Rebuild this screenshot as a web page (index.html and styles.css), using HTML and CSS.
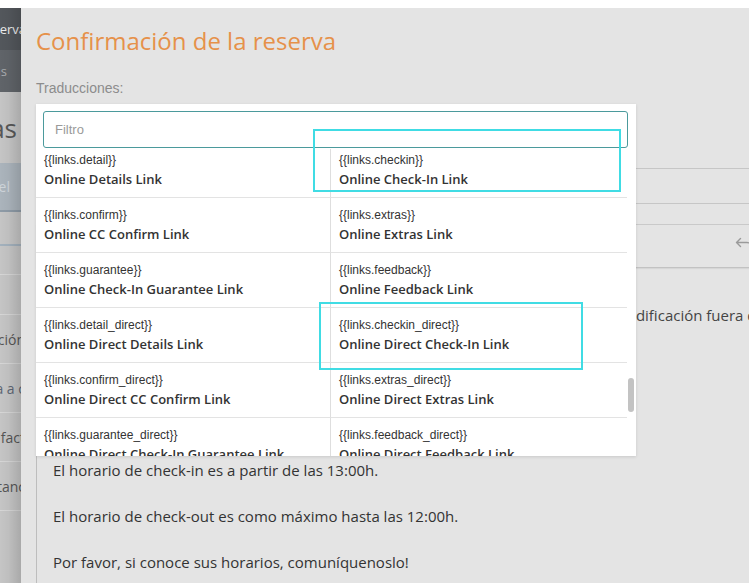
FILE: index.html
```html
<!DOCTYPE html>
<html lang="es">
<head>
<meta charset="utf-8">
<title>Confirmación de la reserva</title>
<link rel="stylesheet" href="styles.css">
</head>
<body>
<div class="page">
  <aside class="under">
    <div class="u-item u-item--dark"><span class="u-text u-text--cut">Reserva</span></div>
    <div class="u-item u-item--sub"><span class="u-text">Extras</span></div>
    <div class="u-heading"><span>Plantillas</span></div>
    <div class="u-tab"><span>Hotel</span></div>
    <ul class="u-list">
      <li class="u-row u-row--first"></li>
      <li class="u-row u-row--short"></li>
      <li class="u-row"><span class="u-cut">Modificación</span></li>
      <li class="u-row"><span class="u-cut u-cut--blue">Bienvenida a c</span></li>
      <li class="u-row"><span class="u-cut">Solicitud fact</span></li>
      <li class="u-row"><span class="u-cut">Estanc</span></li>
      <li class="u-row"></li>
    </ul>
  </aside>

  <section class="modal">
    <h2 class="modal-title">Confirmación de la reserva</h2>
    <div class="field-label">Traducciones:</div>

    <div class="form">
      <div class="dropdown">
        <div class="filter">Filtro</div>
        <div class="list">
          <div class="list-inner">
            <div class="cell"><div class="code">{{links.detail}}</div><div class="name">Online Details Link</div></div>
            <div class="cell"><div class="code">{{links.checkin}}</div><div class="name">Online Check-In Link</div></div>
            <div class="cell"><div class="code">{{links.confirm}}</div><div class="name">Online CC Confirm Link</div></div>
            <div class="cell"><div class="code">{{links.extras}}</div><div class="name">Online Extras Link</div></div>
            <div class="cell"><div class="code">{{links.guarantee}}</div><div class="name">Online Check-In Guarantee Link</div></div>
            <div class="cell"><div class="code">{{links.feedback}}</div><div class="name">Online Feedback Link</div></div>
            <div class="cell"><div class="code">{{links.detail_direct}}</div><div class="name">Online Direct Details Link</div></div>
            <div class="cell"><div class="code">{{links.checkin_direct}}</div><div class="name">Online Direct Check-In Link</div></div>
            <div class="cell"><div class="code">{{links.confirm_direct}}</div><div class="name">Online Direct CC Confirm Link</div></div>
            <div class="cell"><div class="code">{{links.extras_direct}}</div><div class="name">Online Direct Extras Link</div></div>
            <div class="cell"><div class="code">{{links.guarantee_direct}}</div><div class="name">Online Direct Check-In Guarantee Link</div></div>
            <div class="cell"><div class="code">{{links.feedback_direct}}</div><div class="name">Online Direct Feedback Link</div></div>
          </div>
          <div class="thumb"></div>
        </div>
      </div>

      <div class="input-line"></div>
      <div class="toolbar">
        <svg class="undo" width="18" height="14" viewBox="0 0 18 14" aria-hidden="true">
          <path d="M5.5 2.5 L1.5 6.5 L5.5 10.5 M1.5 6.5 H12 A4.5 4.5 0 0 1 16.5 11 V14" fill="none" stroke="#9a9a9a" stroke-width="1.4" stroke-linecap="round" stroke-linejoin="round"/>
        </svg>
      </div>
      <p class="note">modificación fuera de plazo tendrá gastos.</p>
      <div class="editor">
        <p>El horario de check-in es a partir de las 13:00h.</p>
        <p>El horario de check-out es como máximo hasta las 12:00h.</p>
        <p>Por favor, si conoce sus horarios, comuníquenoslo!</p>
      </div>
    </div>
  </section>
</div>

<div class="hl hl-one"></div>
<div class="hl hl-two"></div>
</body>
</html>
```
FILE: styles.css
```css
html, body {
  margin: 0;
  padding: 0;
}
body {
  background: #ffffff;
  font-family: "Open Sans", "Liberation Sans", sans-serif;
  width: 749px;
  height: 583px;
  overflow: hidden;
}
.page {
  padding-top: 8px;
  display: flex;
  height: 575px;
  overflow: hidden;
}

/* ---------- underlying page (left strip) ---------- */
.under {
  width: 21px;
  flex: none;
  overflow: hidden;
  position: relative;
  background: #c5c5c5;
  white-space: nowrap;
}
.under::after {
  content: "";
  position: absolute;
  inset: 0;
  background: linear-gradient(to right, rgba(0,0,0,0) 0%, rgba(0,0,0,0.03) 40%, rgba(0,0,0,0.14) 100%);
  pointer-events: none;
}
.u-item {
  height: 42px;
  display: flex;
  align-items: center;
  justify-content: flex-end;
  font-size: 13px;
}
.u-item--dark {
  background: #53575c;
  color: #ececec;
}
.u-item--sub {
  background: #606469;
  color: #a9acaf;
  padding-right: 14px;
}
.u-text--cut {
  margin-right: -5px;
}
.u-heading {
  height: 71px;
  display: flex;
  align-items: center;
  justify-content: flex-end;
  padding-right: 4px;
  font-size: 26px;
  color: #575757;
}
.u-tab {
  height: 47px;
  background: #abb4bc;
  border-bottom: 2px solid #8e9ba7;
  display: flex;
  align-items: center;
  justify-content: flex-end;
  padding-right: 11px;
  font-size: 14px;
  color: #cfd5da;
}
.u-list {
  list-style: none;
  margin: 32px 0 0;
  padding: 0;
}
.u-row {
  height: 48px;
  border-top: 1px solid #d6d6d6;
  display: flex;
  align-items: center;
  justify-content: flex-end;
  font-size: 14px;
  color: #555;
}
.u-row--first {
  height: 28px;
  border-top: 2px solid #a3b1bd;
}
.u-row--short {
  height: 39px;
}
.u-cut {
  margin-right: -4px;
}
.u-cut--blue {
  color: #5d6673;
}

/* ---------- modal ---------- */
.modal {
  flex: 1;
  min-width: 0;
  background: #e4e4e4;
  padding: 17px 0 0 15px;
  overflow: hidden;
  position: relative;
}
.modal-title {
  margin: 0;
  font-family: "Open Sans", sans-serif;
  font-weight: 400;
  font-size: 24px;
  line-height: 32px;
  color: #e6914a;
}
.field-label {
  margin-top: 21px;
  margin-bottom: 6px;
  font-family: "Liberation Sans", Arial, sans-serif;
  font-size: 14px;
  line-height: 20px;
  color: #8c8c8c;
}
.form {
  position: relative;
  width: 740px;
  display: flow-root;
}

/* dropdown */
.dropdown {
  position: absolute;
  top: 0;
  left: 0;
  width: 600px;
  height: 352px;
  background: #ffffff;
  z-index: 2;
  display: flex;
  flex-direction: column;
  box-shadow: 0 1px 3px rgba(0,0,0,0.12);
}
.filter {
  margin: 7px 8px 1px 7px;
  height: 37px;
  box-sizing: border-box;
  border: 1px solid #4b9a9c;
  border-radius: 3px;
  padding-left: 11px;
  display: flex;
  align-items: center;
  font-family: "Liberation Sans", Arial, sans-serif;
  font-size: 13px;
  color: #9a9a9a;
  flex: none;
}
.list {
  flex: 1;
  position: relative;
  overflow: hidden;
}
.list-inner {
  margin-top: -6px;
  display: grid;
  grid-template-columns: 294px 297px;
}
.cell {
  height: 55px;
  box-sizing: border-box;
  border-bottom: 1px solid #e3e3e3;
  padding: 8px 0 0 8px;
  white-space: nowrap;
  overflow: hidden;
}
.cell:nth-child(even) {
  border-left: 1px solid #dedede;
}
.code {
  font-family: "Liberation Sans", Arial, sans-serif;
  font-size: 12px;
  line-height: 18px;
  color: #333;
}
.name {
  font-family: "Open Sans", sans-serif;
  font-weight: 600;
  font-size: 13px;
  line-height: 20px;
  color: #333;
}
.thumb {
  position: absolute;
  right: 2px;
  top: 229px;
  width: 6px;
  height: 34px;
  border-radius: 3px;
  background: #c3c3c3;
}

/* fields behind dropdown */
.input-line {
  margin-top: 64px;
  height: 36px;
  box-sizing: border-box;
  border-top: 1px solid #c6c6c6;
  border-bottom: 1px solid #c6c6c6;
}
.toolbar {
  margin-top: 20px;
  height: 44px;
  box-sizing: border-box;
  border-top: 1px solid #c9c9c9;
  border-bottom: 1px solid #c2c2c2;
  box-shadow: 0 1px 1px rgba(0,0,0,0.06);
  display: flex;
  align-items: center;
  justify-content: flex-end;
  padding: 0 23px 6px 0;
}
.undo {
  display: block;
}
.note {
  margin: 36px 0 0;
  padding-left: 577px;
  font-size: 15px;
  line-height: 22px;
  color: #444;
  white-space: nowrap;
}
.editor {
  margin-top: 114px;
  border-left: 1px solid #bdbdbd;
  padding: 18px 0 20px 16px;
}
.editor p {
  margin: 0 0 22px;
  font-size: 15px;
  line-height: 24px;
  color: #333;
}

/* annotation highlights */
.hl {
  position: absolute;
  box-sizing: border-box;
  border: 2px solid #40dce4;
  z-index: 5;
  pointer-events: none;
}
.hl-one {
  left: 313px;
  top: 129px;
  width: 308px;
  height: 63px;
}
.hl-two {
  left: 319px;
  top: 302px;
  width: 264px;
  height: 68px;
}
```
